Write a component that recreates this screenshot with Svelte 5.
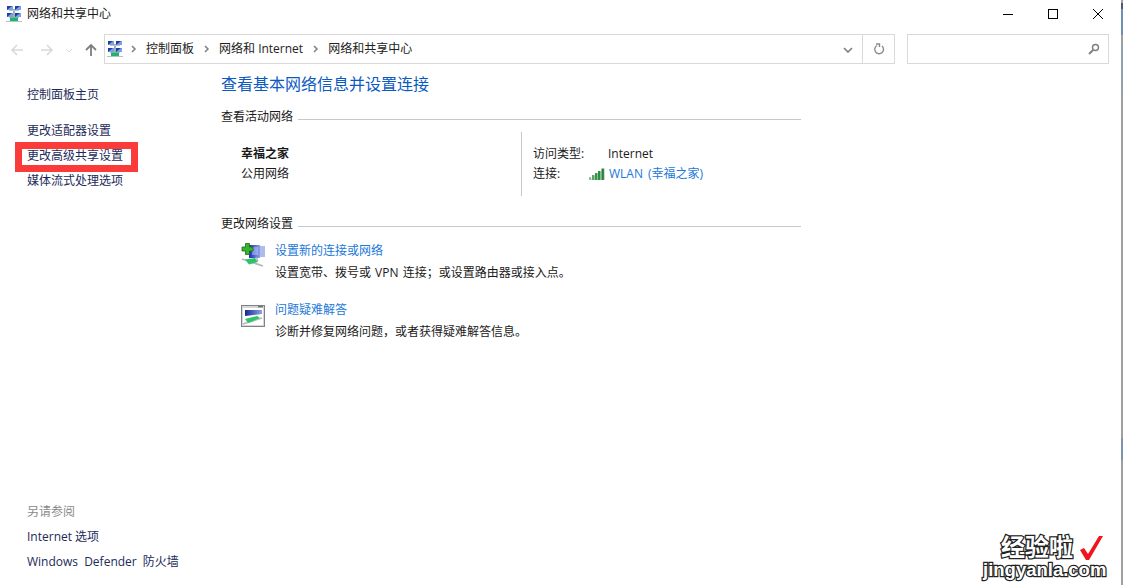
<script>
    const sideLinks = ['更改适配器设置', '更改高级共享设置', '媒体流式处理选项']
</script>

{#snippet netIcon()}
    <svg class="netIcon" viewBox="0 0 16 16">
        <rect x="7" y="3" width="2" height="9" fill="#9fb0b0"/>
        <rect x="3" y="4" width="10" height="1" fill="#b7c4d4"/>
        <rect x="3" y="11" width="10" height="1" fill="#b7c4d4"/>
        <rect x="1" y="0" width="6" height="4" fill="#7f9fe0"/><path d="M1 0h5L1 4z" fill="#1d3fa8"/>
        <rect x="9" y="0" width="6" height="4" fill="#7f9fe0"/><path d="M9 0h5L9 4z" fill="#1d3fa8"/>
        <rect x="1" y="7" width="6" height="4" fill="#7f9fe0"/><path d="M1 7h5L1 11z" fill="#1d3fa8"/>
        <rect x="9" y="7" width="6" height="4" fill="#7f9fe0"/><path d="M9 7h5L9 11z" fill="#1d3fa8"/>
        <rect x="4" y="11.5" width="8" height="3.5" fill="#1fb36b"/>
        <rect x="0" y="15" width="16" height="1" fill="#b9bfc2"/>
    </svg>
{/snippet}

<div class="window">
    <div class="titlebar">
        {@render netIcon()}
        <span class="title">网络和共享中心</span>
        <div class="winButtons">
            <svg viewBox="0 0 12 12"><path d="M1 6.5h10" stroke="#000" stroke-width="1" fill="none"/></svg>
            <svg viewBox="0 0 12 12"><rect x="1.5" y="1.5" width="9" height="9" stroke="#000" fill="none"/></svg>
            <svg viewBox="0 0 12 12"><path d="M1 1l10 10M11 1L1 11" stroke="#000" fill="none"/></svg>
        </div>
    </div>

    <div class="navbar">
        <div class="navButtons">
            <svg class="arrow" viewBox="0 0 14 14"><path d="M13 7H2M7 2L2 7l5 5" stroke="#d9d9d9" stroke-width="1.6" fill="none"/></svg>
            <svg class="arrow fwd" viewBox="0 0 14 14"><path d="M1 7h11M7 2l5 5-5 5" stroke="#d9d9d9" stroke-width="1.6" fill="none"/></svg>
            <svg class="drop" viewBox="0 0 8 5"><path d="M1 1l3 3 3-3" stroke="#dcdcdc" fill="none"/></svg>
            <svg class="arrow up" viewBox="0 0 14 14"><path d="M7 13V2M2 7l5-5 5 5" stroke="#7e7e7e" stroke-width="1.8" fill="none"/></svg>
        </div>
        <div class="address">
            {@render netIcon()}
            <svg class="crumbSep first" viewBox="0 0 25 8"><path d="M11 1l3 3-3 3" stroke="#808080" stroke-width="1.5" fill="none"/></svg>
            <span class="crumb">控制面板</span>
            <svg class="crumbSep" viewBox="0 0 25 8"><path d="M11 1l3 3-3 3" stroke="#808080" stroke-width="1.5" fill="none"/></svg>
            <span class="crumb">网络和 Internet</span>
            <svg class="crumbSep" viewBox="0 0 25 8"><path d="M11 1l3 3-3 3" stroke="#808080" stroke-width="1.5" fill="none"/></svg>
            <span class="crumb">网络和共享中心</span>
            <svg class="chevron" viewBox="0 0 10 6"><path d="M1 1l4 4 4-4" stroke="#7d7d7d" stroke-width="1.6" fill="none"/></svg>
            <div class="refresh">
                <svg viewBox="0 0 12 12"><path d="M4 2.5A4.4 4.4 0 1 0 9 3M3 1h3.5v3" stroke="#8a8a8a" stroke-width="1.4" fill="none"/></svg>
            </div>
        </div>
        <div class="search">
            <svg viewBox="0 0 12 12"><circle cx="7.5" cy="4.5" r="3" stroke="#7d7d7d" stroke-width="1.4" fill="none"/><path d="M5 7l-4 4" stroke="#7d7d7d" stroke-width="1.8"/></svg>
        </div>
    </div>

    <div class="body">
        <aside class="sidebar">
            <div class="sideTop">
                <a class="sideHome">控制面板主页</a>
                <div class="sideLinks">
                    {#each sideLinks as link, i}
                        <a class:marked={i === 1}>{link}</a>
                    {/each}
                </div>
            </div>
            <div class="seeAlso">
                <div class="seeTitle">另请参阅</div>
                <a>Internet 选项</a>
                <a class="wide">Windows Defender 防火墙</a>
            </div>
        </aside>

        <main class="content">
            <h1>查看基本网络信息并设置连接</h1>

            <div class="sectionHead"><span>查看活动网络</span><i></i></div>
            <div class="active">
                <div class="activeName">
                    <b>幸福之家</b>
                    <span>公用网络</span>
                </div>
                <div class="activeInfo">
                    <div class="infoRow"><span class="infoLabel">访问类型:</span><span>Internet</span></div>
                    <div class="infoRow">
                        <span class="infoLabel short">连接:</span>
                        <svg class="signal" viewBox="0 0 16 12">
                            <path d="M0 12L16 0v12z" fill="#c9dfcc"/>
                            <rect x="0" y="9" width="2" height="3" fill="#8fc29a"/>
                            <rect x="3" y="7" width="2.4" height="5" fill="#5ba56a"/>
                            <rect x="6" y="5" width="2.4" height="7" fill="#3f9350"/>
                            <rect x="9" y="3" width="2.4" height="9" fill="#2f8a44"/>
                            <rect x="12.5" y="0.5" width="2.4" height="11.5" fill="#2a803e"/>
                        </svg>
                        <a class="link wlan">WLAN (幸福之家)</a>
                    </div>
                </div>
            </div>

            <div class="sectionHead second"><span>更改网络设置</span><i></i></div>
            <div class="task">
                <svg class="taskIcon" viewBox="0 0 24 24">
                    <defs>
                        <linearGradient id="screenBlue" x1="0" y1="0" x2="1" y2="0">
                            <stop offset="0" stop-color="#1a2bb8"/>
                            <stop offset="1" stop-color="#8ea2ea"/>
                        </linearGradient>
                    </defs>
                    <rect x="15" y="3" width="9" height="11" fill="#aebde8"/>
                    <rect x="8" y="2" width="11" height="13" fill="url(#screenBlue)"/>
                    <rect x="11" y="4" width="6" height="8" fill="#dce4fa" opacity=".4"/>
                    <path d="M1 4h3.5V0.5h4V4H12v4H8.5v3.5h-4V8H1z" fill="#35b52a" stroke="#1d6b14" stroke-width=".8"/>
                    <path d="M1 16l21 7" stroke="#b4b9bc" stroke-width="1.8"/>
                    <path d="M4 16.5l10-1.5 3 4-9 2.5z" fill="#2fc368"/>
                    <path d="M15 14l2 4" stroke="#a9aeb2" stroke-width="1.2"/>
                </svg>
                <div>
                    <a class="link">设置新的连接或网络</a>
                    <p class="spaced">设置宽带、拨号或 VPN 连接；或设置路由器或接入点。</p>
                </div>
            </div>
            <div class="task">
                <svg class="taskIcon low" viewBox="0 0 24 22">
                    <defs>
                        <linearGradient id="barBlue" x1="0" y1="0" x2="1" y2="0">
                            <stop offset="0" stop-color="#14288f"/>
                            <stop offset="1" stop-color="#8ea4e2"/>
                        </linearGradient>
                    </defs>
                    <rect x="0.5" y="0.5" width="23" height="21" fill="#d5d8db" stroke="#7f8387"/>
                    <rect x="2" y="3" width="20" height="17" fill="#fff"/>
                    <rect x="17" y="1" width="5" height="1.4" fill="#6f7377"/>
                    <path d="M4 5h17v4L4 11z" fill="url(#barBlue)"/>
                    <path d="M2 19l19-6" stroke="#b4b9bc" stroke-width="1.6"/>
                    <path d="M4 14l12-3 3 2-12 5z" fill="#2fc368"/>
                </svg>
                <div>
                    <a class="link">问题疑难解答</a>
                    <p>诊断并修复网络问题，或者获得疑难解答信息。</p>
                </div>
            </div>
        </main>
    </div>

    <div class="watermark">
        <div class="wmTop"><span>经验啦</span>
            <svg viewBox="0 0 24 24"><path d="M1 14l4-2 4 6L20 0h4L10 24H7z" fill="#f0141c"/></svg>
        </div>
        <div class="wmUrl">jingyanla.com</div>
    </div>
    <div class="edge"></div>
</div>

<style>
    :global(body) {
        margin: 0;
        background: #fff;
    }

    .window {
        position: relative;
        width: 1123px;
        height: 585px;
        overflow: hidden;
        display: flex;
        flex-direction: column;
        font-family: "Open Sans", "Noto Sans CJK SC", sans-serif;
        font-size: 12px;
        color: #1a1a1a;
        background: #fff;
    }

    a {
        color: #1c2a5a;
        display: block;
    }

    .titlebar {
        height: 28px;
        display: flex;
        align-items: center;
        padding-left: 6px;
        box-sizing: border-box;
    }

    .netIcon {
        width: 16px;
        height: 16px;
        flex: none;
    }

    .title {
        margin-left: 5px;
        line-height: 16px;
    }

    .winButtons {
        margin-left: auto;
        display: flex;
        gap: 33px;
        padding-right: 19px;
    }

    .winButtons svg {
        width: 12px;
        height: 12px;
    }

    .navbar {
        height: 30px;
        margin-top: 6px;
        display: flex;
    }

    .navButtons {
        width: 104px;
        display: flex;
        align-items: center;
        padding: 2px 0 0 10px;
        box-sizing: border-box;
    }

    .arrow {
        width: 14px;
        height: 14px;
    }

    .fwd {
        margin-left: 16px;
    }

    .drop {
        width: 8px;
        height: 5px;
        margin-left: 11px;
    }

    .up {
        margin-left: 11px;
    }

    .address {
        width: 791px;
        box-sizing: border-box;
        border: 1px solid #d9d9d9;
        display: flex;
        align-items: center;
        padding-left: 2px;
        color: #222;
    }

    .crumb {
        padding-bottom: 2px;
    }

    .crumbSep {
        width: 25px;
        height: 8px;
        flex: none;
    }

    .first {
        margin-left: -2px;
    }

    .chevron {
        width: 10px;
        height: 6px;
        margin: 2px 9px 0 auto;
    }

    .refresh {
        width: 31px;
        height: 100%;
        border-left: 1px solid #d9d9d9;
        display: flex;
        align-items: center;
        justify-content: center;
    }

    .refresh svg {
        width: 12px;
        height: 12px;
    }

    .search {
        width: 202px;
        margin-left: 12px;
        box-sizing: border-box;
        border: 1px solid #d9d9d9;
        display: flex;
        align-items: center;
        justify-content: flex-end;
        padding-right: 8px;
    }

    .search svg {
        width: 12px;
        height: 12px;
    }

    .body {
        flex: 1;
        display: flex;
        min-height: 0;
    }

    .sidebar {
        width: 221px;
        flex: none;
        box-sizing: border-box;
        padding: 23px 0 15px 27px;
        display: flex;
        flex-direction: column;
        justify-content: space-between;
        line-height: 16px;
    }

    .sideLinks {
        margin-top: 20px;
        display: flex;
        flex-direction: column;
        gap: 9px;
    }

    .marked {
        position: relative;
    }

    .marked::before {
        content: "";
        position: absolute;
        left: -12px;
        top: -6px;
        width: 109px;
        height: 16px;
        border: 7px solid #fb3a3a;
    }

    .seeTitle {
        color: #8a8a8a;
    }

    .seeAlso a {
        margin-top: 9px;
    }

    .wide {
        word-spacing: 3px;
    }

    .content {
        flex: 1;
        line-height: 16px;
    }

    h1 {
        margin: 10px 0 0;
        font-size: 16px;
        font-weight: 400;
        line-height: 20px;
        color: #0a5ac2;
    }

    .sectionHead {
        width: 580px;
        margin-top: 15px;
        display: flex;
        align-items: center;
        gap: 5px;
    }

    .sectionHead i {
        flex: 1;
        height: 1px;
        background: #c8c8c8;
        margin-top: 4px;
    }

    .second {
        margin-top: 20px;
        margin-bottom: 11px;
    }

    .active {
        width: 580px;
        height: 64px;
        margin-top: 7px;
        display: flex;
    }

    .activeName {
        width: 300px;
        box-sizing: border-box;
        padding: 14px 0 0 20px;
        display: flex;
        flex-direction: column;
        gap: 4px;
    }

    .activeName b {
        font-weight: 700;
    }

    .activeInfo {
        flex: 1;
        border-left: 1px solid #c8c8c8;
        padding: 14px 0 0 11px;
        display: flex;
        flex-direction: column;
        gap: 4px;
    }

    .infoRow {
        display: flex;
        align-items: center;
    }

    .infoLabel {
        width: 75px;
    }

    .short {
        width: 56px;
    }

    .signal {
        width: 16px;
        height: 12px;
        margin-right: 4px;
    }

    .link {
        color: #1a78d8;
    }

    .wlan {
        word-spacing: 2px;
    }

    .task {
        display: flex;
        margin-top: 8px;
        padding-left: 20px;
        height: 51px;
        gap: 10px;
    }

    .task p {
        margin: 6px 0 0;
    }

    .spaced {
        word-spacing: 1px;
    }

    .taskIcon {
        width: 24px;
        height: 24px;
        flex: none;
    }

    .low {
        height: 22px;
        margin-top: 3px;
    }

    .watermark {
        position: absolute;
        right: 16px;
        bottom: 5px;
        width: 124px;
        font-family: "Liberation Sans", "Noto Sans CJK SC", sans-serif;
        font-weight: 700;
        color: #fff;
        -webkit-text-stroke: 2.5px #222;
        paint-order: stroke fill;
        white-space: nowrap;
    }

    .wmTop {
        display: flex;
        align-items: center;
        font-size: 24px;
        line-height: 24px;
        padding-left: 18px;
    }

    .wmTop svg {
        width: 24px;
        height: 24px;
        margin-left: 6px;
    }

    .wmUrl {
        font-size: 18.5px;
        line-height: 20px;
    }

    .edge {
        position: absolute;
        right: 0;
        top: 0;
        bottom: 0;
        width: 2px;
        background: linear-gradient(#a0a0a0 3px, #4a5a70 3px, #4a5a70 9px, #6f8fb4 9px, #6f8fb4 35px, #a0a0a0 35px, #8aa0b8 60px, #a0a0a0 105px, #a0a0a0 438px, #7f93ad 438px, #7f93ad 460px, #a0a0a0 460px);
    }
</style>
